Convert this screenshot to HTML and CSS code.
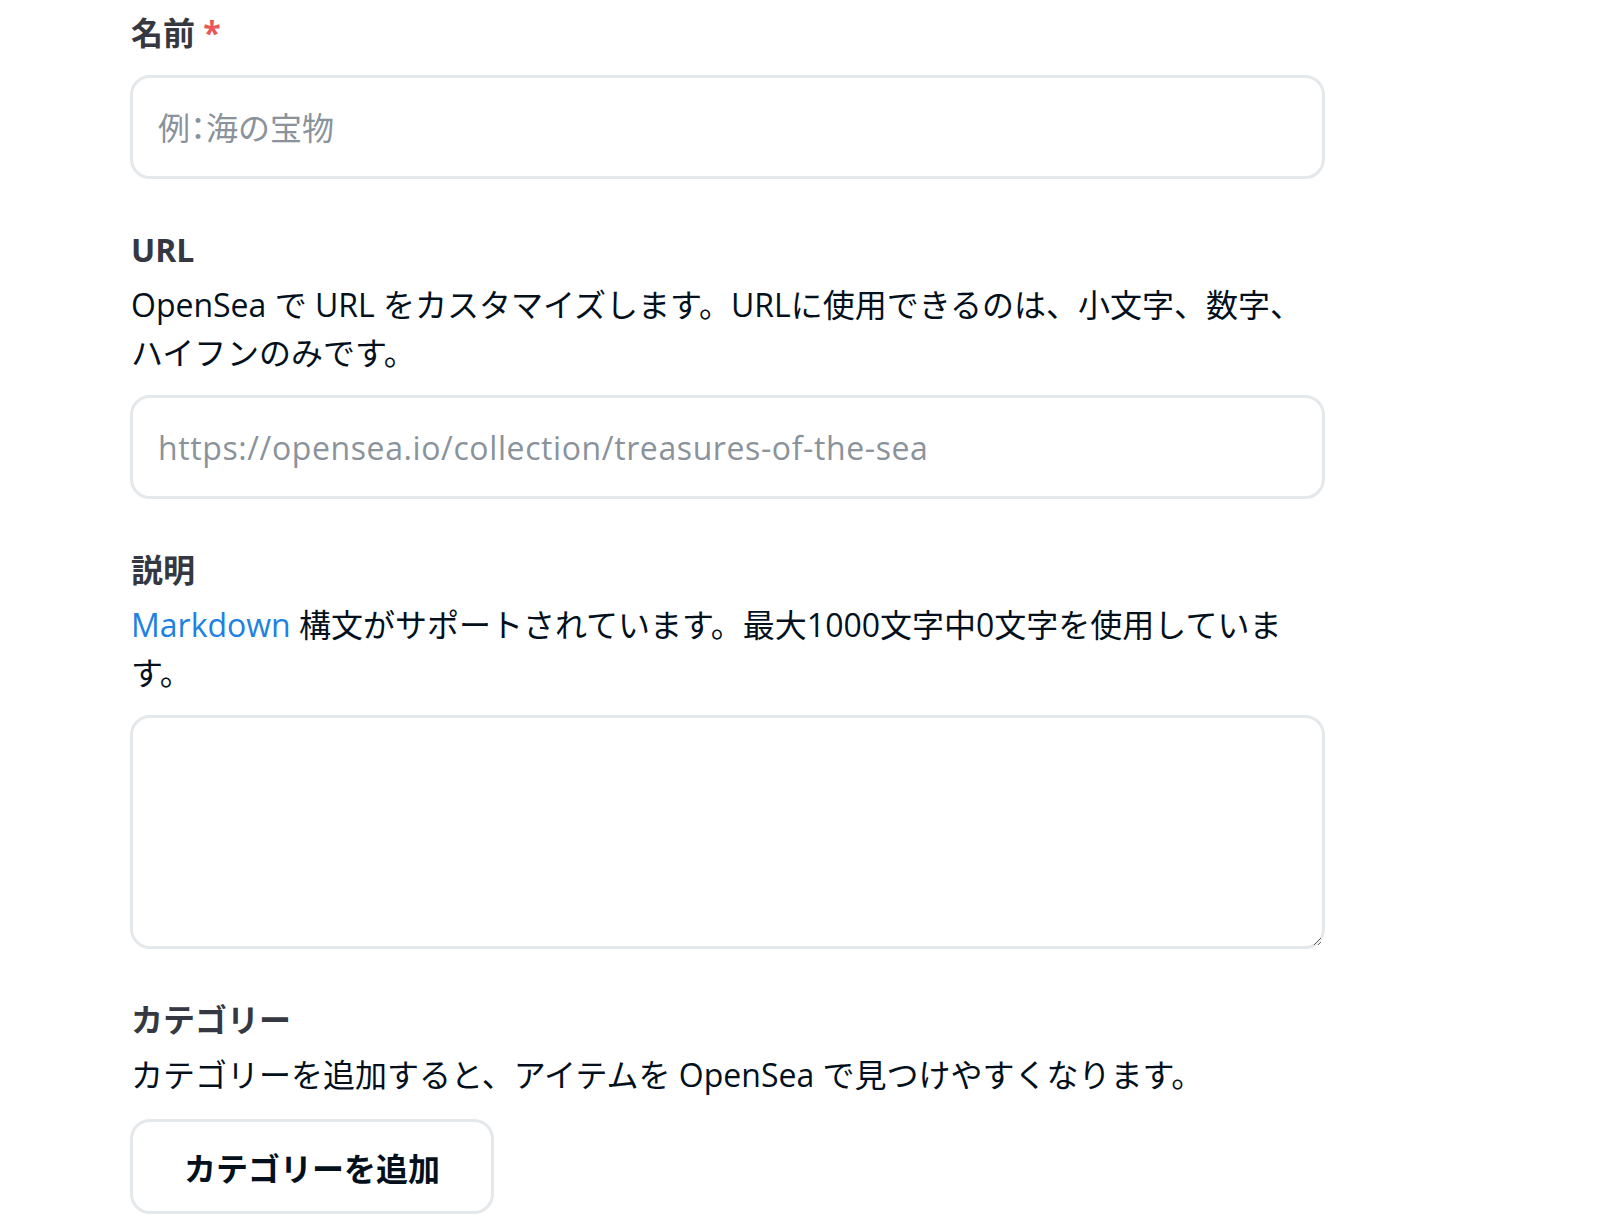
FILE: index.html
```html
<!DOCTYPE html>
<html lang="ja">
<head>
<meta charset="utf-8">
<title>コレクションを作成</title>
<link rel="stylesheet" href="styles.css">
</head>
<body>
<form class="form">
  <div class="field first">
    <label class="label" for="name">名前 <span class="req">*</span></label>
    <input class="input input-name" id="name" type="text" placeholder="例：海の宝物">
  </div>
  <div class="field">
    <label class="label" for="url">URL</label>
    <p class="desc">OpenSea で URL をカスタマイズします。URLに使用できるのは、小文字、数字、ハイフンのみです。</p>
    <input class="input input-url" id="url" type="text" placeholder="https://opensea.io/collection/treasures-of-the-sea">
  </div>
  <div class="field">
    <label class="label" for="desc">説明</label>
    <p class="desc"><a class="link" href="#">Markdown</a> 構文がサポートされています。最大1000文字中0文字を使用しています。</p>
    <textarea class="input textarea" id="desc"></textarea>
  </div>
  <div class="field">
    <span class="label">カテゴリー</span>
    <p class="desc">カテゴリーを追加すると、アイテムを OpenSea で見つけやすくなります。</p>
    <button class="btn" type="button">カテゴリーを追加</button>
  </div>
</form>
</body>
</html>
```

FILE: styles.css
```css
html, body {
  margin: 0;
  padding: 0;
  background: #ffffff;
}
body {
  font-family: "Open Sans", "Noto Sans CJK JP", sans-serif;
  color: #04111d;
}
.form {
  width: 1195px;
  padding: 9px 0 20px 130px;
}
.field {
  display: flex;
  flex-direction: column;
  align-items: flex-start;
  margin-top: 47px;
}
.field.first {
  margin-top: 0;
}
.label {
  display: block;
  font-size: 32px;
  line-height: 48px;
  font-weight: 700;
  color: #353840;
  padding-left: 1px;
}
.req {
  color: #eb5757;
}
.desc {
  margin: 7px 0 0;
  font-size: 32px;
  line-height: 48px;
  font-weight: 400;
  color: #04111d;
  max-width: 1180px;
  padding-left: 1px;
}
.link {
  color: #2081e2;
  text-decoration: none;
}
.input {
  box-sizing: border-box;
  width: 1195px;
  height: 104px;
  margin-top: 18px;
  border: 3px solid #e5e8eb;
  border-radius: 20px;
  padding: 0 25px;
  font-family: "Open Sans", "Noto Sans CJK JP", sans-serif;
  font-size: 32px;
  color: #04111d;
  background: #ffffff;
  outline: none;
}
.input::placeholder {
  color: #8a939b;
  opacity: 1;
}
.input-name {
  font-feature-settings: "halt";
}
.input-url {
  letter-spacing: 0.6px;
}
.textarea {
  height: 234px;
  padding: 20px 25px;
  resize: vertical;
}
.btn {
  box-sizing: border-box;
  height: 95px;
  margin-top: 20px;
  padding: 0 51px;
  border: 3px solid #e5e8eb;
  border-radius: 20px;
  background: #ffffff;
  font-family: "Open Sans", "Noto Sans CJK JP", sans-serif;
  font-size: 32px;
  font-weight: 700;
  color: #04111d;
  cursor: pointer;
}
```
